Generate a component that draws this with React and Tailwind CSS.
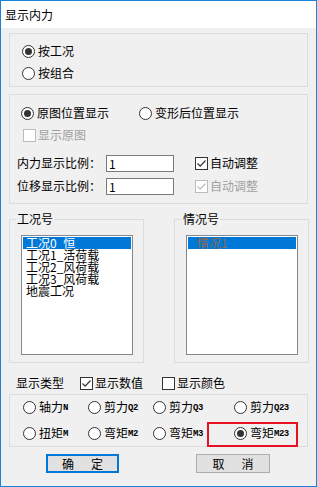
import clsx from 'clsx';

const LOAD_CASES = ['工况0_恒', '工况1_活荷载', '工况2_风荷载', '工况3_风荷载', '地震工况'];

function Radio({ checked, label, code, className }) {
  return (
    <label className={clsx('flex items-center', className)}>
      <span className="w-[13px] h-[13px] shrink-0 rounded-full border border-[#333333] bg-white flex items-center justify-center">
        {checked && <span className="w-[7px] h-[7px] rounded-full bg-[#333333]" />}
      </span>
      <span className="ml-[3px] whitespace-nowrap">{label}</span>
      {code && (
        <span className="pt-[3px] font-['Liberation_Mono',monospace] text-[9px] leading-[9px] font-bold tracking-[-0.5px]">
          {code}
        </span>
      )}
    </label>
  );
}

function Check({ checked, disabled, label, className }) {
  const c = disabled ? '#bcbcbc' : '#333333';
  return (
    <label className={clsx('flex items-center', className)}>
      <span
        className={clsx(
          'w-[13px] h-[13px] shrink-0 border bg-white flex items-center justify-center',
          disabled ? 'border-[#bcbcbc]' : 'border-[#333333]'
        )}
      >
        {checked && (
          <svg width="11" height="11" viewBox="0 0 11 11">
            <path d="M1.5 5.5 L4.2 8.2 L9.5 2.5" fill="none" stroke={c} strokeWidth="1.2" />
          </svg>
        )}
      </span>
      <span className={clsx('ml-[2px] whitespace-nowrap', disabled && 'text-[#a0a0a0]')}>{label}</span>
    </label>
  );
}

export default function App() {
  return (
    <div className="w-[317px] h-[487px] border border-[#1883d7] bg-[#f0f0f0] flex flex-col text-[12px] leading-[12px] text-black font-['Noto_Sans_CJK_SC','Microsoft_YaHei',sans-serif]">
      {/* Title bar */}
      <div className="h-[27px] bg-white flex items-center pl-[4px] text-[12px]">显示内力</div>

      <div className="flex-1 flex flex-col pl-[8px]">
        {/* Mode */}
        <div className="mt-[5px] w-[299px] h-[54px] border border-[#dcdcdc] pt-[6px] pl-[12px] flex flex-col">
          <Radio checked label="按工况" className="h-[22px]" />
          <Radio label="按组合" className="h-[22px]" />
        </div>

        {/* Position / scale */}
        <div className="mt-[7px] w-[299px] h-[110px] border border-[#dcdcdc] pt-[7px] flex flex-col">
          <div className="h-[22px] flex items-center pl-[11px]">
            <Radio checked label="原图位置显示" className="w-[118px]" />
            <Radio label="变形后位置显示" />
          </div>
          <Check disabled label="显示原图" className="h-[22px] pl-[13px]" />
          <div className="mt-[6px] h-[22px] flex items-center pl-[7px]">
            <span className="w-[89px]">内力显示比例：</span>
            <input
              readOnly
              value="1"
              className="w-[68px] h-[17px] border border-[#7a7a7a] bg-white px-[2px] text-[12px] outline-none"
            />
            <Check checked label="自动调整" className="ml-[21px]" />
          </div>
          <div className="mt-[1px] h-[22px] flex items-center pl-[7px]">
            <span className="w-[89px]">位移显示比例：</span>
            <input
              readOnly
              value="1"
              className="w-[68px] h-[17px] border border-[#7a7a7a] bg-white px-[2px] text-[12px] outline-none"
            />
            <Check checked disabled label="自动调整" className="ml-[21px]" />
          </div>
        </div>

        {/* Lists */}
        <div className="mt-[9px] flex gap-[30px]">
          <fieldset className="w-[135px] h-[150px] border border-[#dcdcdc] p-0 m-0">
            <legend className="ml-[6px] px-[1px] leading-[12px]">工况号</legend>
            <div className="mt-[10px] ml-[11px] w-[112px] h-[120px] border border-[#828790] bg-white p-[1px]">
              {LOAD_CASES.map((name, i) => (
                <div
                  key={name}
                  className={clsx('h-[12px] leading-[12px] pl-[3px]', i === 0 && 'bg-[#0078d7] text-white')}
                >
                  {name}
                </div>
              ))}
            </div>
          </fieldset>
          <fieldset className="w-[135px] h-[150px] border border-[#dcdcdc] p-0 m-0">
            <legend className="ml-[7px] px-[1px] leading-[12px]">情况号</legend>
            <div className="mt-[10px] ml-[11px] w-[112px] h-[120px] border border-[#828790] bg-white p-[1px]">
              <div className="h-[12px] leading-[12px] pl-[9px] bg-[#0078d7] text-[#8c6a4f]">情况1</div>
            </div>
          </fieldset>
        </div>

        {/* Display type */}
        <div className="mt-[9px] h-[22px] flex items-center pl-[7px]">
          <span>显示类型</span>
          <Check checked label="显示数值" className="ml-[16px]" />
          <Check label="显示颜色" className="ml-[19px]" />
        </div>

        <div className="relative w-[299px] h-[53px] border border-[#dcdcdc] pt-[1px] pl-[13px] flex flex-col">
          <div className="h-[22px] flex items-center">
            <Radio label="轴力" code="N" className="w-[65px]" />
            <Radio label="剪力" code="Q2" className="w-[65px]" />
            <Radio label="剪力" code="Q3" className="w-[81px]" />
            <Radio label="剪力" code="Q23" />
          </div>
          <div className="mt-[4px] h-[22px] flex items-center">
            <Radio label="扭矩" code="M" className="w-[65px]" />
            <Radio label="弯矩" code="M2" className="w-[65px]" />
            <Radio label="弯矩" code="M3" className="w-[81px]" />
            <Radio checked label="弯矩" code="M23" />
          </div>
          <div className="absolute left-[197px] top-[27px] w-[91px] h-[25px] border-2 border-[#e81123]" />
        </div>

        {/* Buttons */}
        <div className="mt-[7px] flex">
          <button className="ml-[37px] w-[73px] h-[19px] border-2 border-[#0078d7] bg-[#e1e1e1] flex items-center justify-center gap-[17px]">
            <span>确</span>
            <span>定</span>
          </button>
          <button className="ml-[77px] w-[74px] h-[19px] border border-[#adadad] bg-[#e1e1e1] flex items-center justify-center gap-[17px]">
            <span>取</span>
            <span>消</span>
          </button>
        </div>
      </div>
    </div>
  );
}
